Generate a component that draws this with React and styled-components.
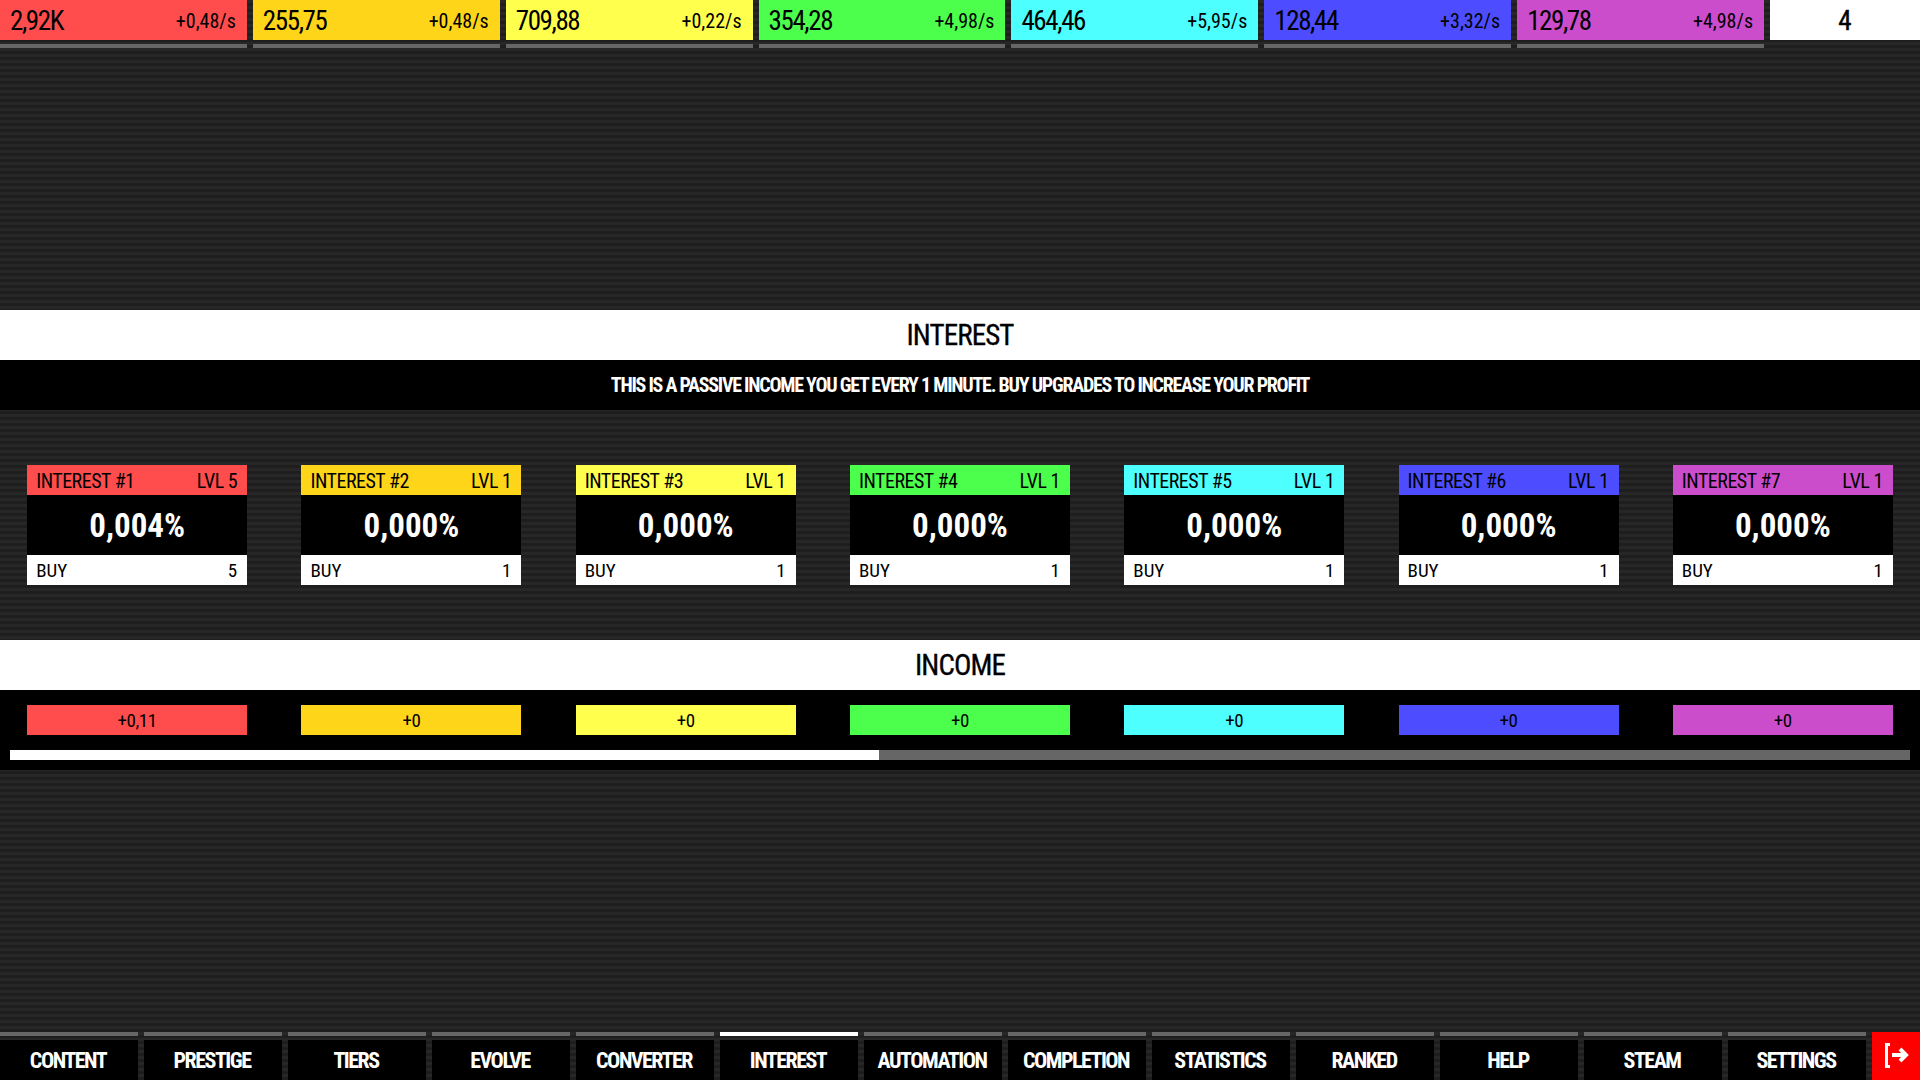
import React from 'react';
import styled, { createGlobalStyle } from 'styled-components';

const Global = createGlobalStyle`
  html, body { margin: 0; padding: 0; height: 100%; overflow: hidden; }
  #root { height: 100%; }
  * { box-sizing: border-box; }
`;

const font = `"Liberation Sans Narrow", "Roboto Condensed", Roboto, "Liberation Sans", sans-serif`;

const Page = styled.div`
  width: 1920px; height: 1080px;
  display: flex; flex-direction: column;
  font-family: ${font};
  color: #000;
  background: repeating-linear-gradient(to bottom, #272727 0, #272727 3px, #1e1e1e 3px, #1e1e1e 6px);
`;
const TopBar = styled.header`display: flex; gap: 6px; height: 48px;`;
const Resource = styled.div`flex: 1; display: flex; flex-direction: column;`;
const ResourceFace = styled.div`
  height: 40px; padding: 2px 11px 0 10px; display: flex; align-items: center; justify-content: space-between;
  background: ${p => p.$c};
`;
const ResourceValue = styled.span`font-size: 27px; letter-spacing: -1.4px;`;
const ResourceRate = styled.span`font-size: 20px;`;
const ResourceTrack = styled.div`height: 4px; margin-top: 4px; background: #666;`;
const Counter = styled.div`
  width: 150px; height: 40px; padding-top: 2px; background: #fff; display: flex; align-items: center; justify-content: center;
  font-size: 27px; -webkit-text-stroke: 0.4px #000;
`;
const Main = styled.main`flex: 1; display: flex; flex-direction: column; justify-content: center;`;
const Title = styled.h1`
  margin: 0; height: 50px; background: #fff; font-size: 29px; font-weight: 400; letter-spacing: -0.9px;
  -webkit-text-stroke: 0.3px #000;
  display: flex; align-items: center; justify-content: center;
`;
const Notice = styled.div`
  height: 50px; background: #000; color: #fff; font-size: 20px; font-weight: 700; letter-spacing: -1.25px;
  display: flex; align-items: center; justify-content: center;
`;
const Cards = styled.section`display: flex; justify-content: space-around; padding: 55px 0;`;
const Card = styled.article`width: 220px; display: flex; flex-direction: column;`;
const CardHead = styled.div`
  height: 30px; padding: 2px 10px 0 9px; display: flex; align-items: center; justify-content: space-between;
  background: ${p => p.$c}; font-size: 20px; letter-spacing: -0.5px;
`;
const CardValue = styled.div`
  height: 60px; background: #000; color: #fff; font-size: 33px; font-weight: 700;
  display: flex; align-items: center; justify-content: center;
`;
const CardBuy = styled.div`
  height: 30px; padding: 0 10px 0 9px; background: #fff; display: flex; align-items: center; justify-content: space-between;
  font-size: 19px;
`;
const IncomePanel = styled.section`background: #000; height: 80px; padding-top: 15px;`;
const IncomeRow = styled.div`display: flex; justify-content: space-around;`;
const IncomeCell = styled.div`
  width: 220px; height: 30px; background: ${p => p.$c};
  display: flex; align-items: center; justify-content: center; font-size: 19px; letter-spacing: -0.4px;
`;
const Progress = styled.div`height: 10px; margin: 15px 10px 0; background: #666;`;
const ProgressFill = styled.div`height: 100%; background: #fff;`;
const BottomBar = styled.nav`display: flex; gap: 6px; height: 48px;`;
const Tab = styled.div`flex: 1; display: flex; flex-direction: column;`;
const TabMark = styled.div`height: 4px; background: ${p => (p.$active ? '#fff' : '#666')};`;
const TabFace = styled.div`
  flex: 1; margin-top: 4px; padding-right: 2px; background: #000; color: #fff; font-size: 22px; font-weight: 700; letter-spacing: -1.5px;
  display: flex; align-items: center; justify-content: center;
`;
const Exit = styled.div`
  width: 48px; background: #f00; color: #fff; display: flex; align-items: center; justify-content: center;
`;

const colors = ['#ff4d4d', '#ffd51a', '#ffff4d', '#4dff4d', '#4dffff', '#4d4dff', '#cc4dcc'];
const resources = [
  ['2,92K', '+0,48/s'], ['255,75', '+0,48/s'], ['709,88', '+0,22/s'], ['354,28', '+4,98/s'],
  ['464,46', '+5,95/s'], ['128,44', '+3,32/s'], ['129,78', '+4,98/s'],
];
const levels = [5, 1, 1, 1, 1, 1, 1];
const tabs = ['CONTENT', 'PRESTIGE', 'TIERS', 'EVOLVE', 'CONVERTER', 'INTEREST', 'AUTOMATION', 'COMPLETION', 'STATISTICS', 'RANKED', 'HELP', 'STEAM', 'SETTINGS'];

export default function App() {
  return (
    <Page>
      <Global />
      <TopBar>
        {resources.map(([v, r], i) => (
          <Resource key={i}>
            <ResourceFace $c={colors[i]}>
              <ResourceValue>{v}</ResourceValue>
              <ResourceRate>{r}</ResourceRate>
            </ResourceFace>
            <ResourceTrack />
          </Resource>
        ))}
        <Counter>4</Counter>
      </TopBar>
      <Main>
        <Title>INTEREST</Title>
        <Notice>THIS IS A PASSIVE INCOME YOU GET EVERY 1 MINUTE. BUY UPGRADES TO INCREASE YOUR PROFIT</Notice>
        <Cards>
          {colors.map((c, i) => (
            <Card key={i}>
              <CardHead $c={c}><span>INTEREST #{i + 1}</span><span>LVL {levels[i]}</span></CardHead>
              <CardValue>{i === 0 ? '0,004%' : '0,000%'}</CardValue>
              <CardBuy><span>BUY</span><span>{levels[i]}</span></CardBuy>
            </Card>
          ))}
        </Cards>
        <Title>INCOME</Title>
        <IncomePanel>
          <IncomeRow>
            {colors.map((c, i) => <IncomeCell key={i} $c={c}>{i === 0 ? '+0,11' : '+0'}</IncomeCell>)}
          </IncomeRow>
          <Progress><ProgressFill style={{ width: '45.75%' }} /></Progress>
        </IncomePanel>
      </Main>
      <BottomBar>
        {tabs.map(t => (
          <Tab key={t}>
            <TabMark $active={t === 'INTEREST'} />
            <TabFace>{t}</TabFace>
          </Tab>
        ))}
        <Exit>
          <svg width="28" height="28" viewBox="0 0 28 28" fill="none" stroke="#fff" strokeWidth="3">
            <path d="M8 2.5H4.5v22H8" />
            <path d="M10 13h14" strokeWidth="4" />
            <path d="M18 7l6 6-6 6" strokeWidth="4" />
          </svg>
        </Exit>
      </BottomBar>
    </Page>
  );
}
